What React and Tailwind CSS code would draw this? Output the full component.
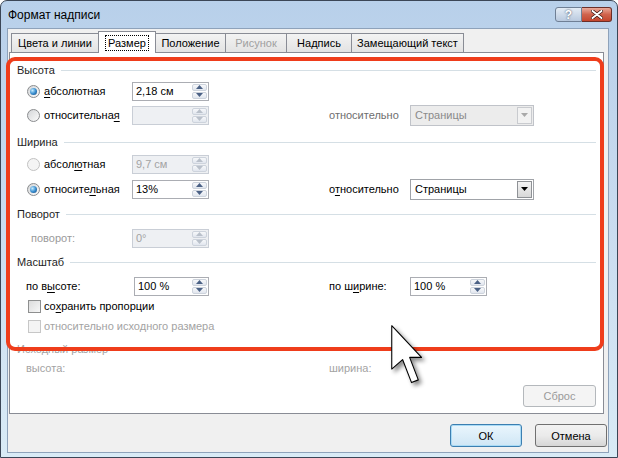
import React from "react";

const U = ({ children }) => (
  <span className="underline decoration-1 underline-offset-[2px]">{children}</span>
);

const Group = ({ title, disabled, className = "" }) => (
  <div className={`flex h-[16px] items-center gap-[6px] ${className}`}>
    <span className={disabled ? "text-[#a3a3a3]" : "text-[#1e1e1e]"}>{title}</span>
    <div className="h-px flex-1 bg-[#d5dfe5]" />
  </div>
);

const Radio = ({ checked, disabled }) => (
  <span
    className={`flex h-[13px] w-[13px] shrink-0 items-center justify-center rounded-full border ${
      disabled
        ? "border-[#c2c2c2] bg-[#f4f4f4]"
        : "border-[#8a8c8e] bg-linear-to-br from-[#d4d6d8] to-[#fbfbfb]"
    }`}
  >
    {checked && (
      <span className="h-[7px] w-[7px] rounded-full bg-[radial-gradient(circle_at_35%_35%,#c4ecff,#3b8fd0_50%,#0d4278)]" />
    )}
  </span>
);

const Check = ({ disabled }) => (
  <span
    className={`h-[13px] w-[13px] shrink-0 border ${
      disabled
        ? "border-[#c7c7c7] bg-[#f4f4f4]"
        : "border-[#8e8f8f] bg-linear-to-br from-[#dcdcdc] to-[#f7f7f7]"
    }`}
  />
);

const Arrow = ({ up, color }) => (
  <svg width="7" height="4" viewBox="0 0 7 4">
    <path d={up ? "M0 4 L3.5 0 L7 4Z" : "M0 0 L7 0 L3.5 4Z"} fill={color} />
  </svg>
);

const SpinBox = ({ value, disabled, width = "w-[77px]" }) => {
  const arrow = disabled ? "#b9c0ca" : "#4b6185";
  return (
    <div
      className={`flex h-[19px] shrink-0 ${width} border ${
        disabled ? "border-[#c9ced6] bg-[#eef0f3]" : "border-[#abadb3] bg-white"
      }`}
    >
      <div
        className={`flex flex-1 items-center pl-[3px] ${
          disabled ? "text-[#a3a3a3]" : "text-black"
        }`}
      >
        {value}
      </div>
      <div className="flex w-[17px] flex-col gap-px p-px">
        <div className="flex flex-1 items-center justify-center rounded-[2px] border border-[#cdd3dc] bg-linear-to-b from-[#f7f8fa] to-[#e1e6ee]">
          <Arrow up color={arrow} />
        </div>
        <div className="flex flex-1 items-center justify-center rounded-[2px] border border-[#cdd3dc] bg-linear-to-b from-[#f7f8fa] to-[#e1e6ee]">
          <Arrow color={arrow} />
        </div>
      </div>
    </div>
  );
};

const Select = ({ value, disabled }) => (
  <div
    className={`flex h-[21px] w-[124px] shrink-0 border ${
      disabled ? "border-[#c0c3c9] bg-[#ececec]" : "border-[#a0a3a8] bg-white"
    }`}
  >
    <div
      className={`flex flex-1 items-center pl-[4px] ${
        disabled ? "text-[#8a8a8a]" : "text-black"
      }`}
    >
      {value}
    </div>
    <div
      className={`my-px mr-px flex w-[15px] items-center justify-center border ${
        disabled
          ? "border-[#c9cbcf] bg-[#f2f2f2]"
          : "border-[#8f9296] bg-linear-to-b from-[#f4f4f4] to-[#d8d8d8]"
      }`}
    >
      <Arrow color={disabled ? "#a9a9a9" : "#000"} />
    </div>
  </div>
);

const Tab = ({ children, w, active, disabled, first }) =>
  active ? (
    <div
      className={`${w} z-10 -mb-px -ml-px flex h-[22px] items-center justify-center border border-b-0 border-[#898c95] bg-white`}
    >
      <span className="px-[2px] leading-[14px] outline-1 outline-dotted outline-black">
        {children}
      </span>
    </div>
  ) : (
    <div
      className={`${w} flex h-[19px] items-center justify-center border-t border-r ${
        first ? "border-l" : ""
      } border-[#898c95] bg-linear-to-b from-[#f3f3f3] to-[#e3e3e3] ${
        disabled ? "text-[#a0a0a0]" : "text-black"
      }`}
    >
      {children}
    </div>
  );

const Button = ({ children, kind }) => {
  if (kind === "disabled")
    return (
      <div className="flex h-[22px] w-[73px] items-center justify-center rounded-[3px] border border-[#b4b8bc] bg-[#f4f4f4] text-[#9a9a9a]">
        {children}
      </div>
    );
  return (
    <div
      className={`flex h-[23px] w-[72px] items-center justify-center rounded-[3px] border ${
        kind === "default"
          ? "border-[#3c7fb1] bg-linear-to-b from-[#eaf6fd] to-[#cfe6f5] shadow-[inset_0_0_0_1px_#a9dbf6]"
          : "border-[#707070] bg-linear-to-b from-[#f2f2f2] via-[#ebebeb] to-[#d6d6d6]"
      }`}
    >
      {children}
    </div>
  );
};

export default function App() {
  return (
    <div className="relative flex h-[458px] w-[618px] flex-col overflow-hidden rounded-t-[7px] border border-[#3b4656] bg-linear-to-b from-[#b8d0ea] via-[#cadcf0] to-[#d9ebf6] font-['Liberation_Sans',Arial,sans-serif] text-[11px] leading-[16px] whitespace-nowrap text-black">
      {/* title bar */}
      <div className="flex h-[27px] items-start justify-between pl-[7px]">
        <span className="mt-[6px] text-[12px] text-black">Формат надписи</span>
        <div className="mt-[6px] mr-[5px] flex">
          <div className="flex h-[15px] w-[27px] items-center justify-center rounded-l-[3px] border border-[#6f7f95] bg-linear-to-b from-[#e4ecf5] to-[#b9c9de] text-[12px] leading-none font-bold text-white [text-shadow:0_0_2px_#2b3a52]">
            ?
          </div>
          <div className="flex h-[15px] w-[30px] items-center justify-center rounded-r-[3px] border border-l-0 border-[#6b2e28] bg-linear-to-b from-[#e9a99a] via-[#d0634d] to-[#c4462e]">
            <svg width="12" height="9" viewBox="0 0 12 9">
              <path d="M1.5 1 L10.5 8 M10.5 1 L1.5 8" stroke="#3b1410" strokeWidth="3.4" strokeLinecap="round" />
              <path d="M1.5 1 L10.5 8 M10.5 1 L1.5 8" stroke="#fff" strokeWidth="2" strokeLinecap="round" />
            </svg>
          </div>
        </div>
      </div>

      {/* client */}
      <div className="ml-[6px] flex h-[425px] w-[602px] flex-col border border-[#8ea2ba] bg-[#f0f0f0] pt-[2px]">
        {/* tabs */}
        <div className="flex h-[21px] items-end pl-[3px]">
          <Tab w="w-[88px]" first>Цвета и линии</Tab>
          <Tab w="w-[58px]" active>Размер</Tab>
          <Tab w="w-[70px]">Положение</Tab>
          <Tab w="w-[61px]" disabled>Рисунок</Tab>
          <Tab w="w-[65px]">Надпись</Tab>
          <Tab w="w-[112px]">Замещающий текст</Tab>
        </div>

        {/* panel */}
        <div className="ml-[1px] flex h-[362px] w-[595px] flex-col border border-[#898c95] bg-white px-[7px] pt-[9px]">
          <Group title="Высота" />
          <div className="mt-[3px] flex h-[20px] items-center pl-[10px]">
            <div className="flex w-[105px] items-center gap-[4px]">
              <Radio checked />
              <span><U>а</U>бсолютная</span>
            </div>
            <SpinBox value="2,18 см" />
            <div className="w-[120px]" />
          </div>
          <div className="mt-[4px] flex h-[20px] items-center pl-[10px]">
            <div className="flex w-[105px] items-center gap-[4px]">
              <Radio />
              <span>относительна<U>я</U></span>
            </div>
            <SpinBox value="" disabled />
            <div className="w-[120px]" />
            <span className="w-[81px] text-[#6e6e6e]">относительно</span>
            <Select value="Страницы" disabled />
          </div>

          <Group title="Ширина" className="mt-[9px]" />
          <div className="mt-[4px] flex h-[20px] items-center pl-[10px]">
            <div className="flex w-[105px] items-center gap-[4px]">
              <Radio disabled />
              <span>абсол<U>ю</U>тная</span>
            </div>
            <SpinBox value="9,7 см" disabled />
          </div>
          <div className="mt-[5px] flex h-[20px] items-center pl-[10px]">
            <div className="flex w-[105px] items-center gap-[4px]">
              <Radio checked />
              <span>относите<U>л</U>ьная</span>
            </div>
            <SpinBox value="13%" />
            <div className="w-[120px]" />
            <span className="w-[81px]">о<U>т</U>носительно</span>
            <Select value="Страницы" />
          </div>

          <Group title="Поворот" className="mt-[7px]" />
          <div className="mt-[6px] flex h-[20px] items-center pl-[10px]">
            <span className="w-[105px] pl-[4px] text-[#9a9a9a]">поворот:</span>
            <SpinBox value="0°" disabled />
          </div>

          <Group title="Масштаб" className="mt-[6px]" />
          <div className="mt-[6px] flex h-[20px] items-center pl-[9px]">
            <span className="w-[108px]">по в<U>ы</U>соте:</span>
            <SpinBox value="100 %" width="w-[75px]" />
            <div className="w-[120px]" />
            <span className="w-[81px]">по ш<U>и</U>рине:</span>
            <SpinBox value="100 %" />
          </div>
          <div className="mt-[2px] flex h-[16px] items-center gap-[3px] pl-[11px]">
            <Check />
            <span>со<U>х</U>ранить пропорции</span>
          </div>
          <div className="mt-[4px] flex h-[16px] items-center gap-[3px] pl-[11px]">
            <Check disabled />
            <span className="text-[#a3a3a3]">относительно исходного размера</span>
          </div>

          <Group title="Исходный размер" disabled className="mt-[7px]" />
          <div className="mt-[3px] flex h-[16px] items-center pl-[9px] text-[#a3a3a3]">
            <span className="w-[303px]">высота:</span>
            <span>ширина:</span>
          </div>

          <div className="mt-[9px] flex justify-end">
            <Button kind="disabled">Сброс</Button>
          </div>
        </div>

        {/* dialog buttons */}
        <div className="mt-[10px] flex justify-end gap-[13px] pr-[1px]">
          <Button kind="default">ОК</Button>
          <Button>Отмена</Button>
        </div>
      </div>

      {/* highlight frame */}
      <div className="pointer-events-none absolute top-[56px] left-[5px] h-[294px] w-[598px] rounded-[9px] border-4 border-[#ef3d1b]" />

      {/* mouse pointer */}
      <svg
        className="pointer-events-none absolute top-[322px] left-[388px] drop-shadow-[3px_3px_2px_rgba(0,0,0,0.45)]"
        width="38"
        height="65"
        viewBox="-1 -1 14 24"
      >
        <path
          d="M0 0 L0 16 L4 12.5 L7.3 21 L9.8 20 L6.6 11.7 L11 11.7 Z"
          fill="#fff"
          stroke="#000"
          strokeWidth="0.4"
          strokeLinejoin="round"
        />
      </svg>
    </div>
  );
}
